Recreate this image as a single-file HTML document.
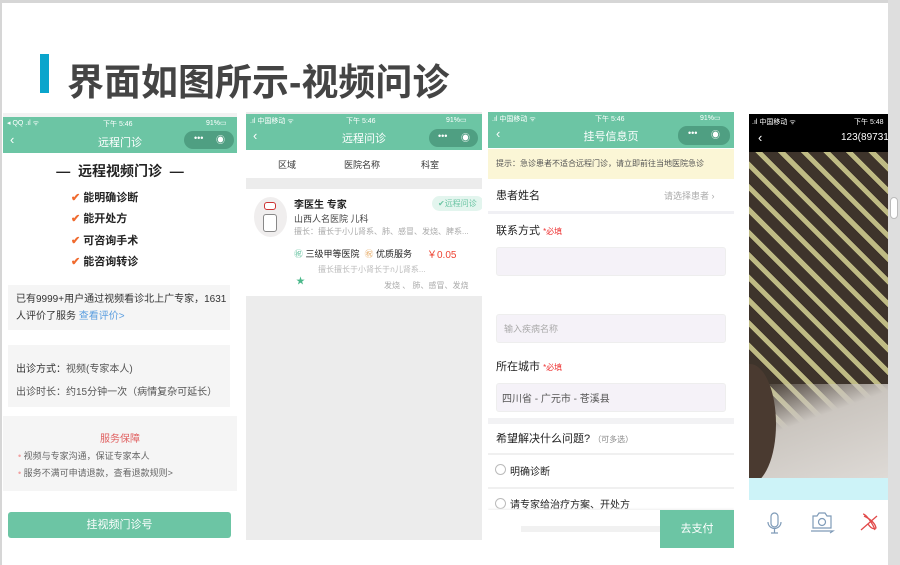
<!DOCTYPE html>
<html><head><meta charset="utf-8"><style>
*{margin:0;padding:0;box-sizing:border-box}
body{width:900px;height:565px;overflow:hidden;background:#fff;position:relative;font-family:"Liberation Sans","Noto Sans CJK SC",sans-serif;color:#333}
.a{position:absolute}
.g{background:#6cc5a4}
.sb{font-size:7px;color:#fff}
.ttl{color:#fff;font-size:11px;text-align:center}
.cap{position:absolute;width:52px;height:18px;border-radius:9px;background:#4f9f82;color:#fff;font-size:9px}
.cap span{position:absolute;top:2px}
.t{position:absolute;white-space:nowrap}
</style></head><body>
<div class="a" style="left:0;top:0;width:888px;height:3px;background:#d6d6d6"></div>
<div class="a" style="left:0;top:0;width:2px;height:565px;background:#d6d6d6"></div>
<div class="a" style="left:888px;top:0;width:12px;height:565px;background:#dedede"></div>
<div class="a" style="left:890px;top:197px;width:8px;height:22px;background:#fff;border:1px solid #bbb;border-radius:4px"></div>
<div class="a" style="left:40px;top:54px;width:9px;height:39px;background:#0aa5cc"></div>
<div class="t" style="left:67px;top:52px;font-size:37px;font-weight:bold;color:#444">界面如图所示-视频问诊</div>

<!-- panel 1 -->
<div class="a" style="left:3px;top:113px;width:234px;height:437px;background:#fff">
 <div class="a" style="left:0;top:0;width:234px;height:4px;background:#f2f2f2"></div>
 <div class="a g" style="left:0;top:4px;width:234px;height:36px"></div>
 <div class="t sb" style="left:4px;top:6px">◂ QQ .ıl ᯤ</div>
 <div class="t sb" style="left:100px;top:6px">下午 5:46</div>
 <div class="t sb" style="left:203px;top:6px">91%▭</div>
 <div class="t" style="left:7px;top:19px;color:#fff;font-size:13px">‹</div>
 <div class="t ttl" style="left:0;width:234px;top:21px">远程门诊</div>
 <div class="cap" style="left:181px;top:18px;width:50px"><span style="left:10px">•••</span><span style="left:32px">◉</span></div>
 <div class="t" style="left:0;width:234px;text-align:center;top:48px;font-size:14px;font-weight:bold;color:#222">—&nbsp;&nbsp;远程视频门诊&nbsp;&nbsp;—</div>
 <div class="t" style="left:68px;top:75px;font-size:11px;font-weight:bold;line-height:21.3px;color:#222"><span style="color:#f06a2e">✔</span> 能明确诊断<br><span style="color:#f06a2e">✔</span> 能开处方<br><span style="color:#f06a2e">✔</span> 可咨询手术<br><span style="color:#f06a2e">✔</span> 能咨询转诊</div>
 <div class="a" style="left:5px;top:172px;width:222px;height:45px;background:#f5f5f5"></div>
 <div class="t" style="left:13px;top:178px;font-size:10px;line-height:17px;color:#333">已有9999+用户通过视频看诊北上广专家，1631<br>人评价了服务 <span style="color:#5b9ee0">查看评价&gt;</span></div>
 <div class="a" style="left:5px;top:232px;width:222px;height:62px;background:#f5f5f5"></div>
 <div class="t" style="left:13px;top:245px;font-size:10px;line-height:23px;color:#555"><b style="color:#333;font-weight:normal">出诊方式：</b>视频(专家本人)<br>出诊时长：约15分钟一次（病情复杂可延长）</div>
 <div class="a" style="left:0;top:303px;width:234px;height:75px;background:#f5f5f5"></div>
 <div class="t" style="left:0;width:234px;text-align:center;top:317px;font-size:10px;color:#e06060">服务保障</div>
 <div class="t" style="left:15px;top:335px;font-size:9px;line-height:17px;color:#666"><span style="color:#f2a0a0">•</span> 视频与专家沟通，保证专家本人<br><span style="color:#f2a0a0">•</span> 服务不满可申请退款，查看退款规则&gt;</div>
 <div class="a" style="left:5px;top:399px;width:223px;height:26px;border-radius:3px;background:#6cc5a4;color:#fff;font-size:11px;text-align:center;line-height:26px">挂视频门诊号</div>
</div>

<!-- panel 2 -->
<div class="a" style="left:246px;top:112px;width:236px;height:428px;background:#ececec;overflow:hidden">
 <div class="a g" style="left:0;top:2px;width:236px;height:36px"></div>
 <div class="t sb" style="left:4px;top:4px">.ıl 中国移动 ᯤ</div>
 <div class="t sb" style="left:100px;top:4px">下午 5:46</div>
 <div class="t sb" style="left:200px;top:4px">91%▭</div>
 <div class="t" style="left:7px;top:16px;color:#fff;font-size:13px">‹</div>
 <div class="t ttl" style="left:0;width:236px;top:18px">远程问诊</div>
 <div class="cap" style="left:183px;top:17px;width:49px"><span style="left:9px">•••</span><span style="left:32px">◉</span></div>
 <div class="a" style="left:0;top:38px;width:236px;height:28px;background:#fff"></div>
 <div class="t" style="left:32px;top:46px;font-size:9px">区域</div>
 <div class="t" style="left:98px;top:46px;font-size:9px">医院名称</div>
 <div class="t" style="left:175px;top:46px;font-size:9px">科室</div>
 <div class="a" style="left:0;top:77px;width:236px;height:107px;background:#fff"></div>
 <div class="a" style="left:8px;top:85px;width:33px;height:40px;border-radius:50%;background:#f0eeee"></div>
 <div class="a" style="left:18px;top:90px;width:12px;height:8px;background:#fff;border:1px solid #c33;border-radius:3px"></div>
 <div class="a" style="left:17px;top:102px;width:14px;height:18px;background:#fff;border:1px solid #888;border-radius:3px"></div>
 <div class="t" style="left:48px;top:84px;font-size:10px;font-weight:bold;color:#222">李医生 专家</div>
 <div class="t" style="left:48px;top:100px;font-size:9px;color:#444">山西人名医院 儿科</div>
 <div class="t" style="left:48px;top:114px;font-size:8px;color:#aaa">擅长：擅长于小儿肾系、肺、感冒、发烧、脾系...</div>
 <div class="a" style="left:186px;top:84px;width:52px;height:15px;border-radius:8px;background:#e3f5ee;color:#6cc5a4;font-size:8px;line-height:15px;padding-left:6px">✔远程问诊</div>
 <div class="t" style="left:48px;top:135px;font-size:9px;color:#222"><span style="color:#6cc5a4">㊗</span> 三级甲等医院 &nbsp;<span style="color:#e8b070">㊗</span> 优质服务</div>
 <div class="t" style="left:181px;top:134px;font-size:10px;color:#e43">￥0.05</div>
 <div class="t" style="left:72px;top:151px;font-size:8px;color:#bbb">擅长擅长于小肾长于ก儿肾系...</div>
 <div class="t" style="left:50px;top:162px;font-size:9px;color:#4bb88a">★</div>
 <div class="t" style="left:138px;top:168px;font-size:8px;color:#aaa">发烧 、 肺、感冒、发烧</div>
</div>

<!-- panel 3 -->
<div class="a" style="left:488px;top:112px;width:246px;height:436px;background:#fff;overflow:hidden">
 <div class="a g" style="left:0;top:0;width:246px;height:36px"></div>
 <div class="t sb" style="left:4px;top:2px">.ıl 中国移动 ᯤ</div>
 <div class="t sb" style="left:107px;top:2px">下午 5:46</div>
 <div class="t sb" style="left:212px;top:2px">91%▭</div>
 <div class="t" style="left:8px;top:14px;color:#fff;font-size:13px">‹</div>
 <div class="t ttl" style="left:0;width:246px;top:16px">挂号信息页</div>
 <div class="cap" style="left:190px;top:14px;width:52px;height:19px"><span style="left:10px">•••</span><span style="left:33px">◉</span></div>
 <div class="a" style="left:0;top:37px;width:246px;height:30px;background:#fbf6d6"></div>
 <div class="t" style="left:8px;top:46px;font-size:8px;color:#555">提示：急诊患者不适合远程门诊，请立即前往当地医院急诊</div>
 <div class="t" style="left:8px;top:75px;font-size:11px;color:#222">患者姓名</div>
 <div class="t" style="left:176px;top:77px;font-size:9px;color:#aaa">请选择患者 ›</div>
 <div class="a" style="left:0;top:99px;width:246px;height:3px;background:#f0f0f4"></div>
 <div class="t" style="left:8px;top:110px;font-size:11px;color:#222">联系方式 <span style="font-size:8px;color:#e33">*必填</span></div>
 <div class="a" style="left:8px;top:135px;width:230px;height:29px;border-radius:3px;background:#f5f2f8;border:1px solid #eee"></div>
 <div class="a" style="left:8px;top:202px;width:230px;height:29px;border-radius:3px;background:#f5f2f8;border:1px solid #eee"></div>
 <div class="t" style="left:16px;top:210px;font-size:9px;color:#aaa">输入疾病名称</div>
 <div class="t" style="left:8px;top:246px;font-size:11px;color:#222">所在城市 <span style="font-size:8px;color:#e33">*必填</span></div>
 <div class="a" style="left:8px;top:271px;width:230px;height:29px;border-radius:3px;background:#f5f2f8;border:1px solid #eee"></div>
 <div class="t" style="left:14px;top:278px;font-size:10px;color:#555">四川省 - 广元市 - 苍溪县</div>
 <div class="a" style="left:0;top:306px;width:246px;height:6px;background:#f2f2f4"></div>
 <div class="t" style="left:8px;top:318px;font-size:11px;color:#222">希望解决什么问题? <span style="font-size:8px;color:#888">（可多选）</span></div>
 <div class="a" style="left:0;top:341px;width:246px;height:2px;background:#f0f0f0"></div>
 <div class="a" style="left:7px;top:352px;width:11px;height:11px;border:1px solid #bbb;border-radius:50%"></div>
 <div class="t" style="left:22px;top:351px;font-size:10px;color:#222">明确诊断</div>
 <div class="a" style="left:0;top:375px;width:246px;height:2px;background:#f0f0f0"></div>
 <div class="a" style="left:7px;top:386px;width:11px;height:11px;border:1px solid #bbb;border-radius:50%"></div>
 <div class="t" style="left:22px;top:384px;font-size:10px;color:#222">请专家给治疗方案、开处方</div>
 <div class="a" style="left:0;top:398px;width:246px;height:38px;background:#fff;box-shadow:0 -1px 2px #eee"></div>
 <div class="a" style="left:33px;top:414px;width:140px;height:6px;background:#f1f1f1"></div>
 <div class="a" style="left:172px;top:398px;width:74px;height:38px;background:#6cc5a4;color:#fff;font-size:11px;line-height:38px;text-align:center">去支付</div>
</div>

<!-- panel 4 -->
<div class="a" style="left:749px;top:114px;width:139px;height:436px;background:#fff;overflow:hidden">
 <div class="a" style="left:0;top:0;width:139px;height:38px;background:#000"></div>
 <div class="t sb" style="left:3px;top:3px">.ıl 中国移动 ᯤ</div>
 <div class="t sb" style="left:105px;top:3px">下午 5:48</div>
 <div class="t" style="left:9px;top:16px;color:#fff;font-size:13px">‹</div>
 <div class="t" style="left:92px;top:18px;color:#fff;font-size:10px">123(89731</div>
 <div class="a" style="left:0;top:38px;width:139px;height:326px;background:repeating-linear-gradient(45deg,#3e342b 0 11px,#bfbb84 11px 16px)"></div>
 <div class="a" style="left:0;top:270px;width:139px;height:94px;background:linear-gradient(160deg,rgba(200,195,190,0) 0,#cbc6c0 40%,#dedad6 100%)"></div>
 <div class="a" style="left:-25px;top:250px;width:52px;height:120px;border-radius:50%;background:#4a3a30"></div>
 <div class="a" style="left:0;top:364px;width:139px;height:22px;background:#cdf3f8"></div>
 <svg class="a" style="left:0;top:386px" width="139" height="50">
  <g fill="none" stroke="#7f9bb8" stroke-width="1.2">
   <rect x="22" y="13" width="7" height="14" rx="3.5"/><path d="M19 22a6.5 6.5 0 0 0 13 0M25.5 29v4M22 33h7"/>
   <path d="M64 16h4l2-3h6l2 3h4v12H64z"/><circle cx="73" cy="22" r="3.5"/><path d="M62 31h22l-3 2"/>
  </g>
  <path d="M114 14c3 0 10 10 12 16M115 16c4 2 11 6 12 12-3 2-6-1-8-4M112 30l16-14" fill="none" stroke="#e24a4a" stroke-width="1.3"/>
 </svg>
</div>
</body></html>
